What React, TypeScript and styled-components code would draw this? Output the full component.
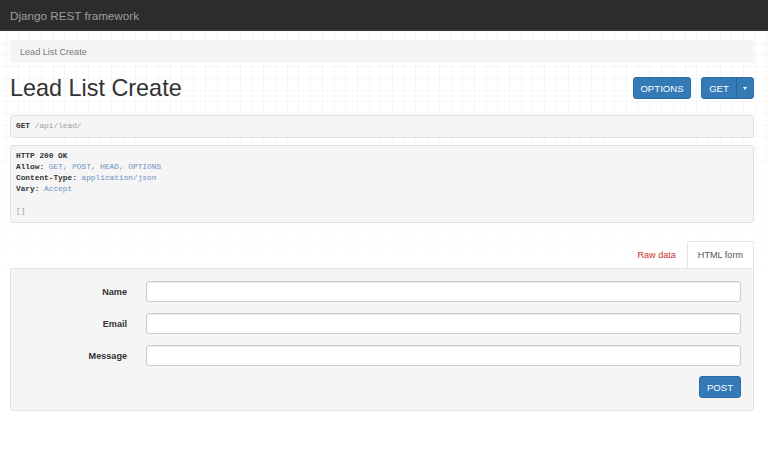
import styled, { createGlobalStyle } from "styled-components";

const GlobalStyle = createGlobalStyle`
  html, body {
    margin: 0;
    padding: 0;
  }
  body {
    font-family: "Liberation Sans", Arial, sans-serif;
    color: #333;
    min-height: 459px;
    background-color: #fff;
    background-image:
      linear-gradient(to bottom, rgba(255, 255, 255, 0) 30px, #fff 280px),
      repeating-linear-gradient(90deg, #f3f3f3 0 1px, transparent 1px 11.7px),
      repeating-linear-gradient(0deg, #f3f3f3 0 1px, transparent 1px 11.7px);
    background-position: 0 0, 6px 0, 0 6px;
  }
`;

const Navbar = styled.header`
  height: 30px;
  background: #2c2c2c;
  border-bottom: 1px solid #3a3a3a;
  display: flex;
  align-items: center;
  padding-left: 10px;
`;

const Brand = styled.span`
  color: #9d9d9d;
  font-size: 11.7px;
`;

const Container = styled.main`
  padding: 9px 14px 0 10px;
`;

const Breadcrumb = styled.div`
  height: 23px;
  background: #f5f5f5;
  border-radius: 3px;
  display: flex;
  align-items: center;
  padding-left: 10px;
  font-size: 9.1px;
  color: #777;
`;

const PageHeader = styled.div`
  display: flex;
  align-items: center;
  justify-content: space-between;
  margin-top: 14px;
  height: 22px;
`;

const Title = styled.h1`
  margin: 0;
  font-size: 23.4px;
  font-weight: 400;
  color: #333;
  line-height: 1;
  padding-top: 2px;
`;

const Actions = styled.div`
  display: flex;
  gap: 10px;
`;

const Button = styled.button<{ $w?: number }>`
  box-sizing: border-box;
  height: 22px;
  width: ${(p) => (p.$w ? `${p.$w}px` : "auto")};
  padding: 0 8px;
  border: 1px solid #2e6da4;
  border-radius: 3px;
  background: #337ab7;
  color: #fff;
  font-family: "Liberation Sans", Arial, sans-serif;
  font-size: 9.6px;
  display: flex;
  align-items: center;
  justify-content: center;
`;

const SplitGroup = styled.div`
  display: flex;
  border-radius: 3px;
  overflow: hidden;
  background: #337ab7;
  border: 1px solid #2e6da4;
`;

const SplitPart = styled.span<{ $w: number; $divider?: boolean }>`
  width: ${(p) => p.$w}px;
  height: 20px;
  color: #fff;
  font-size: 9.6px;
  display: flex;
  align-items: center;
  justify-content: center;
  border-left: ${(p) => (p.$divider ? "1px solid #2a6496" : "none")};
`;

const Caret = styled.span`
  width: 0;
  height: 0;
  border-left: 2.5px solid transparent;
  border-right: 2.5px solid transparent;
  border-top: 3px solid #fff;
`;

const Well = styled.pre<{ $top: number }>`
  margin: ${(p) => p.$top}px 0 0;
  background: #f5f5f5;
  border: 1px solid #e1e1e1;
  border-radius: 3px;
  padding: 5px 5px 5px;
  font-family: "Liberation Mono", "Courier New", monospace;
  font-size: 7.8px;
  line-height: 11px;
  color: #333;
  white-space: pre;
`;

const Key = styled.b`
  color: #333;
`;

const Lit = styled.span<{ $muted?: boolean }>`
  color: ${(p) => (p.$muted ? "#a0a0a0" : "#6b93c4")};
`;

const Tabs = styled.div`
  display: flex;
  justify-content: flex-end;
  align-items: flex-end;
  margin-top: 18px;
  height: 27px;
`;

const Tab = styled.span<{ $active?: boolean }>`
  height: 26px;
  display: flex;
  align-items: center;
  padding: 0 10px;
  font-size: 9.1px;
  color: ${(p) => (p.$active ? "#555" : "#c9302c")};
  background: ${(p) => (p.$active ? "#fff" : "transparent")};
  border: 1px solid ${(p) => (p.$active ? "#e3e3e3" : "transparent")};
  border-bottom: none;
  border-radius: 3px 3px 0 0;
`;

const Panel = styled.form`
  background: #f5f5f5;
  border: 1px solid #e3e3e3;
  border-radius: 0 0 3px 3px;
  padding: 12px;
  display: flex;
  flex-direction: column;
  gap: 11px;
`;

const FieldRow = styled.div`
  display: grid;
  grid-template-columns: 104px 1fr;
  column-gap: 19px;
  align-items: center;
`;

const Label = styled.label`
  text-align: right;
  font-size: 9.1px;
  font-weight: 700;
  color: #333;
`;

const Input = styled.input`
  box-sizing: border-box;
  height: 21px;
  width: 100%;
  margin: 0;
  border: 1px solid #ccc;
  border-radius: 3px;
  background: #fff;
  box-shadow: inset 0 1px 1px rgba(0, 0, 0, 0.075);
`;

const FormActions = styled.div`
  display: flex;
  justify-content: flex-end;
  margin-top: -1px;
`;

const fields = ["Name", "Email", "Message"];

export default function App() {
  return (
    <>
      <GlobalStyle />
      <Navbar>
        <Brand>Django REST framework</Brand>
      </Navbar>
      <Container>
        <Breadcrumb>Lead List Create</Breadcrumb>

        <PageHeader>
          <Title>Lead List Create</Title>
          <Actions>
            <Button $w={58} type="button">
              OPTIONS
            </Button>
            <SplitGroup>
              <SplitPart $w={34}>GET</SplitPart>
              <SplitPart $w={16} $divider>
                <Caret />
              </SplitPart>
            </SplitGroup>
          </Actions>
        </PageHeader>

        <Well $top={16}>
          <Key>GET</Key> <Lit $muted>/api/lead/</Lit>
        </Well>

        <Well $top={7}>
          <Key>HTTP 200 OK</Key>
          {"\n"}
          <Key>Allow:</Key> <Lit>GET, POST, HEAD, OPTIONS</Lit>
          {"\n"}
          <Key>Content-Type:</Key> <Lit>application/json</Lit>
          {"\n"}
          <Key>Vary:</Key> <Lit>Accept</Lit>
          {"\n\n"}
          <Lit $muted>[]</Lit>
        </Well>

        <Tabs>
          <Tab>Raw data</Tab>
          <Tab $active>HTML form</Tab>
        </Tabs>
        <Panel>
          {fields.map((name) => (
            <FieldRow key={name}>
              <Label>{name}</Label>
              <Input type="text" />
            </FieldRow>
          ))}
          <FormActions>
            <Button $w={42} type="button">POST</Button>
          </FormActions>
        </Panel>
      </Container>
    </>
  );
}
